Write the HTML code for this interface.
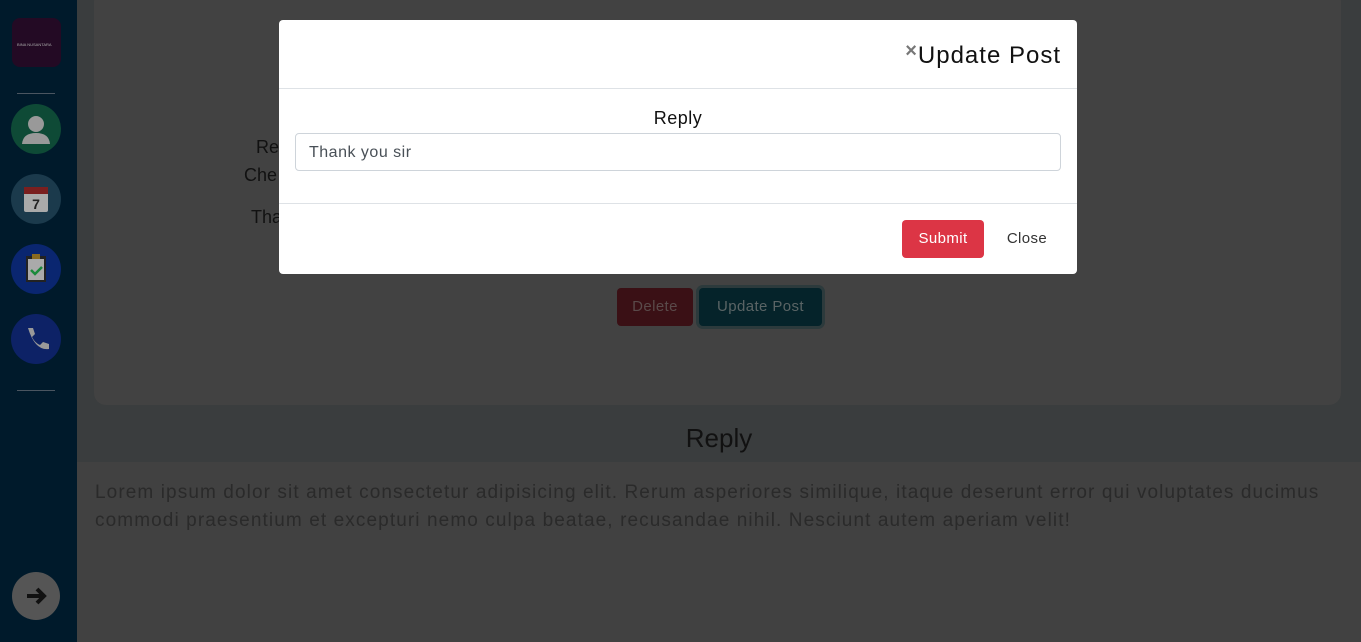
<!DOCTYPE html>
<html><head><meta charset="utf-8"><style>
*{box-sizing:border-box;margin:0;padding:0}
body{width:1361px;height:642px;overflow:hidden;background:#3a3d3e;font-family:"Liberation Sans",sans-serif;position:relative}
.side{position:absolute;left:0;top:0;width:77px;height:642px;background:#001a2b}
.ic{position:absolute;left:11px;width:50px;height:50px;border-radius:50%}
.hr{position:absolute;left:17px;width:38px;height:1px;background:#4a5560}
.card{position:absolute;left:94px;top:-10px;width:1247px;height:415px;background:#424242;border-radius:12px}
.ta{position:absolute;left:77px;top:462px;width:1284px;height:180px;background:#414141;color:#2a2a2a;font-size:19px;line-height:28px;padding:17px 10px 17px 18px;letter-spacing:1.1px;word-spacing:0px}
.modal{position:absolute;left:279px;top:20px;width:798px;height:254px;background:#fff;border-radius:4px}
.btn{position:absolute;border-radius:4px;font-size:15px;text-align:center;letter-spacing:.4px}
</style></head><body>
<div class="side">
<div style="position:absolute;left:12px;top:18px;width:49px;height:49px;border-radius:8px;background:#230a24"><div style="position:absolute;left:5px;top:24px;font-size:4px;color:#aaa">BINA NUSANTARA</div></div>
<div class="hr" style="top:93px"></div>
<div class="ic" style="top:104px;background:#0e4a36"><svg width="50" height="50"><circle cx="25" cy="20" r="8" fill="#999"/><path d="M11 40 Q12 29 25 29 Q38 29 39 40Z" fill="#999"/></svg></div>
<div class="ic" style="top:174px;background:#1b3a4c"><svg width="50" height="50"><rect x="13" y="13" width="24" height="25" rx="2" fill="#aaa"/><rect x="13" y="13" width="24" height="7" fill="#7a1f1f"/><text x="25" y="35" font-size="14" font-weight="bold" text-anchor="middle" fill="#222" font-family="Liberation Sans">7</text></svg></div>
<div class="ic" style="top:244px;background:#0a2670"><svg width="50" height="50"><rect x="15" y="12" width="20" height="26" fill="#222"/><rect x="17" y="15" width="16" height="21" fill="#aaa"/><rect x="21" y="10" width="8" height="5" fill="#8a6a20"/><path d="M20 26l4 4 7-7" stroke="#1a8a3a" stroke-width="2.5" fill="none"/></svg></div>
<div class="ic" style="top:314px;background:#0d2266"><svg width="50" height="50"><path d="M17 14l5 0 2 6-3 3q3 6 8 8l3-3 6 2 0 5q-14 2-21-21z" fill="#999"/></svg></div>
<div class="hr" style="top:390px"></div>
<div class="ic" style="top:572px;left:12px;width:48px;height:48px;background:#555"><svg width="48" height="48"><path d="M15 24h16M25 17l7 7-7 7" stroke="#111" stroke-width="4" fill="none"/></svg></div>
</div>
<div class="card">
<div style="position:absolute;left:162px;top:147px;font-size:18px;color:#111">Re</div>
<div style="position:absolute;left:150px;top:175px;font-size:18px;color:#111">Che</div>
<div style="position:absolute;left:157px;top:217px;font-size:18px;color:#111">Tha</div>
<div class="btn" style="left:523px;top:298px;width:76px;height:38px;background:#3a1015;color:#5a4a4a;line-height:38px">Delete</div>
<div class="btn" style="left:605px;top:298px;width:123px;height:38px;background:#05232a;line-height:38px;box-shadow:0 0 0 3px #2c3a3c;color:#5a6465">Update Post</div>
</div>
<div style="position:absolute;left:77px;width:1284px;top:423px;text-align:center;font-size:26px;color:#111">Reply</div>
<div class="ta">Lorem ipsum dolor sit amet consectetur adipisicing elit. Rerum asperiores similique, itaque deserunt error qui voluptates ducimus commodi praesentium et excepturi nemo culpa beatae, recusandae nihil. Nesciunt autem aperiam velit!</div>
<div class="modal">
<div style="position:absolute;right:16px;top:20px;font-size:24px;color:#111;letter-spacing:1px"><span style="font-size:20px;color:#777;vertical-align:6px;font-weight:bold">×</span>Update Post</div>
<div style="position:absolute;left:0;right:0;top:68px;height:1px;background:#dee2e6"></div>
<div style="position:absolute;left:0;right:0;top:88px;text-align:center;font-size:18px;color:#111;letter-spacing:.5px">Reply</div>
<div style="position:absolute;left:16px;top:113px;width:766px;height:38px;border:1px solid #ced4da;border-radius:4px;padding:0 13px;line-height:38px;font-size:16px;color:#495057;letter-spacing:.5px">Thank you sir</div>
<div style="position:absolute;left:0;right:0;top:183px;height:1px;background:#dee2e6"></div>
<div class="btn" style="left:623px;top:200px;width:82px;height:38px;background:#dc3545;color:#fff;line-height:38px">Submit</div>
<div class="btn" style="left:714px;top:200px;width:68px;height:38px;color:#333;line-height:38px">Close</div>
</div>
</body></html>
